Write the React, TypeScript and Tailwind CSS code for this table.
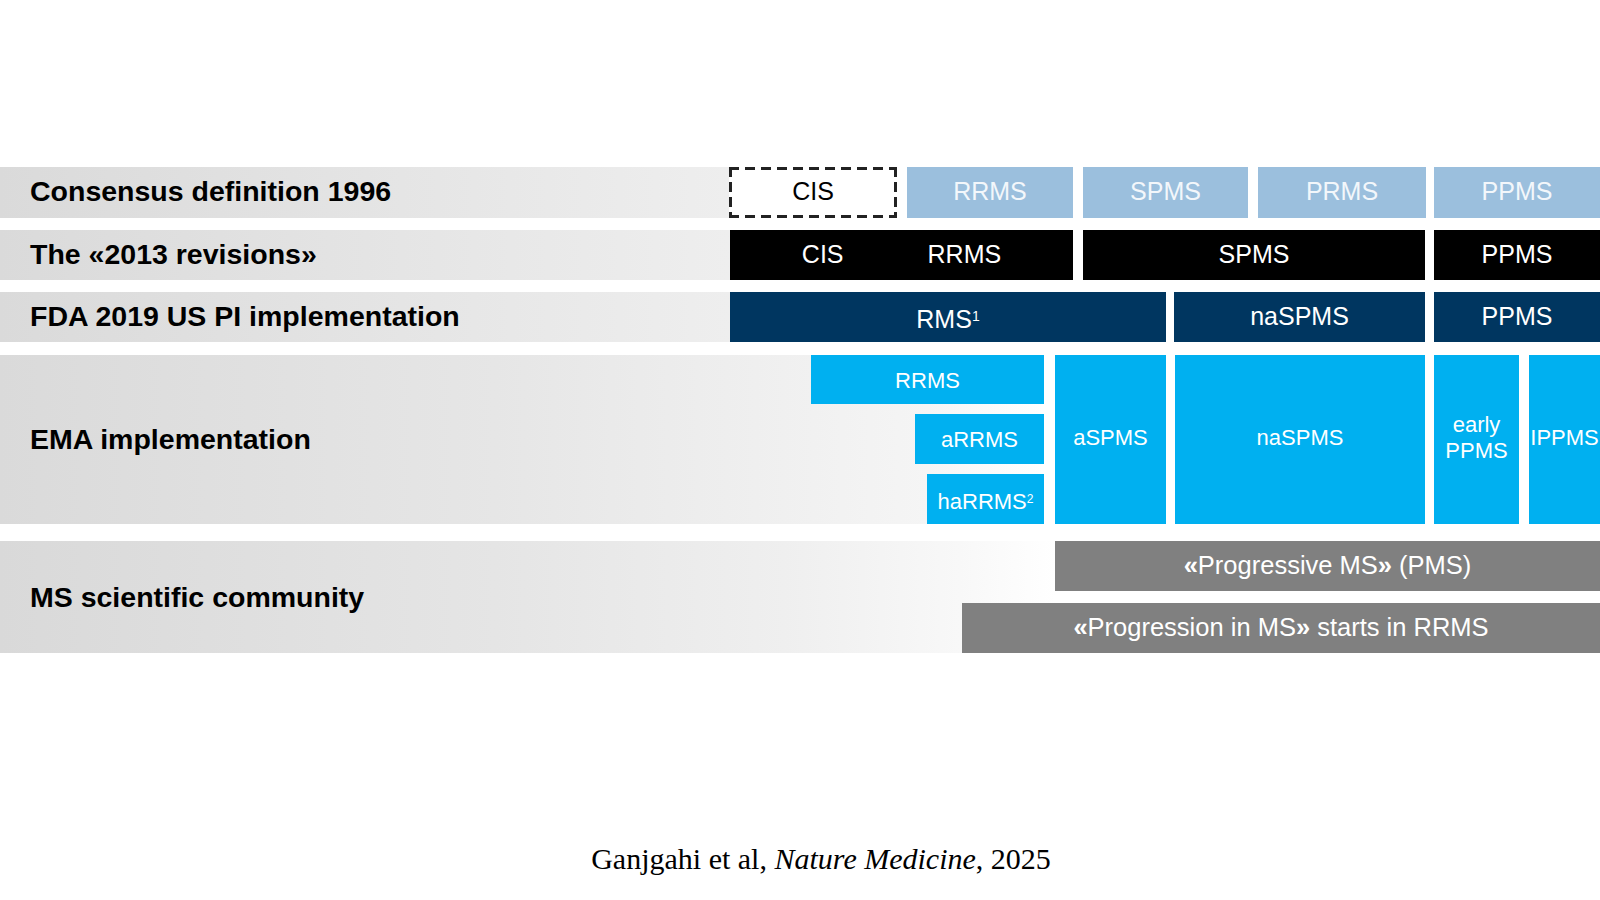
import React from "react";

const sans = { fontFamily: '"Liberation Sans", Arial, sans-serif' };

export default function App() {
  return (
    <div
      className="w-[1600px] h-[900px] bg-white flex flex-col overflow-hidden"
      style={sans}
    >
      <div className="h-[167px] shrink-0" />

      {/* Row 1 */}
      <div className="flex h-[51px] shrink-0">
        <div className="w-[729px] flex items-center pl-[30px] pb-[2px] text-[28.5px] font-bold text-black bg-[linear-gradient(to_right,#dadada,#eeeeee)]">
          Consensus definition 1996
        </div>
        <div className="w-[168px] bg-white bg-[image:repeating-linear-gradient(to_right,#222222_0_10px,transparent_10px_16px),repeating-linear-gradient(to_right,#222222_0_10px,transparent_10px_16px),repeating-linear-gradient(to_bottom,#222222_0_10px,transparent_10px_15px),repeating-linear-gradient(to_bottom,#222222_0_10px,transparent_10px_15px)] bg-[position:left_top,left_bottom,left_top,right_top] bg-[size:100%_3px,100%_3px,3px_100%,3px_100%] bg-no-repeat flex items-center justify-center pb-[2px] text-[25px] text-black">
          CIS
        </div>
        <div className="ml-[10px] w-[166px] bg-[#9bbfdd] flex items-center justify-center pb-[2px] text-[25px] text-[#f3f7fb]">
          RRMS
        </div>
        <div className="ml-[10px] w-[165px] bg-[#9bbfdd] flex items-center justify-center pb-[2px] text-[25px] text-[#f3f7fb]">
          SPMS
        </div>
        <div className="ml-[10px] w-[168px] bg-[#9bbfdd] flex items-center justify-center pb-[2px] text-[25px] text-[#f3f7fb]">
          PRMS
        </div>
        <div className="ml-[8px] flex-1 bg-[#9bbfdd] flex items-center justify-center pb-[2px] text-[25px] text-[#f3f7fb]">
          PPMS
        </div>
      </div>

      {/* Row 2 */}
      <div className="flex h-[50px] mt-[12px] shrink-0">
        <div className="w-[730px] flex items-center pl-[30px] pb-[2px] text-[28.5px] font-bold text-black bg-[linear-gradient(to_right,#dadada,#eeeeee)]">
          The «2013 revisions»
        </div>
        <div className="w-[343px] bg-black flex items-center justify-center gap-[84px] text-[25px] text-white">
          <span>CIS</span>
          <span>RRMS</span>
        </div>
        <div className="ml-[10px] w-[342px] bg-black flex items-center justify-center text-[25px] text-white">
          SPMS
        </div>
        <div className="ml-[9px] flex-1 bg-black flex items-center justify-center text-[25px] text-white">
          PPMS
        </div>
      </div>

      {/* Row 3 */}
      <div className="flex h-[50px] mt-[12px] shrink-0">
        <div className="w-[730px] flex items-center pl-[30px] pb-[2px] text-[28.5px] font-bold text-black bg-[linear-gradient(to_right,#dadada,#eeeeee)]">
          FDA 2019 US PI implementation
        </div>
        <div className="w-[436px] bg-[#003660] flex items-center justify-center text-[25px] text-white">
          <span className="pt-[6px]">
            RMS<sup className="text-[14px]">1</sup>
          </span>
        </div>
        <div className="ml-[8px] w-[251px] bg-[#003660] flex items-center justify-center text-[25px] text-white">
          naSPMS
        </div>
        <div className="ml-[9px] flex-1 bg-[#003660] flex items-center justify-center text-[25px] text-white">
          PPMS
        </div>
      </div>

      {/* Row 4: EMA */}
      <div className="flex h-[169px] mt-[13px] shrink-0 bg-[linear-gradient(to_right,#dadada_0%,#e6e6e6_31%,#f0f0f0_49%,#f5f5f5_58%,#ffffff_65.2%)]">
        <div className="w-[811px] shrink-0 flex items-center pl-[30px] text-[28.5px] font-bold text-black">
          EMA implementation
        </div>
        <div className="w-[233px] shrink-0 flex flex-col items-end gap-[10px] text-[22px] text-white">
          <div className="w-full h-[49px] bg-[#00b0f0] flex items-center justify-center pt-[2px]">
            RRMS
          </div>
          <div className="w-[129px] h-[50px] bg-[#00b0f0] flex items-center justify-center">
            aRRMS
          </div>
          <div className="w-[117px] h-[50px] bg-[#00b0f0] flex items-center justify-center">
            <span className="pt-[4px]">
              haRRMS<sup className="text-[12px]">2</sup>
            </span>
          </div>
        </div>
        <div className="ml-[11px] w-[111px] shrink-0 bg-[#00b0f0] flex items-center justify-center pb-[4px] text-[22px] text-white">
          aSPMS
        </div>
        <div className="ml-[9px] w-[250px] shrink-0 bg-[#00b0f0] flex items-center justify-center pb-[4px] text-[22px] text-white">
          naSPMS
        </div>
        <div className="ml-[9px] w-[85px] shrink-0 bg-[#00b0f0] flex flex-col items-center justify-center pb-[4px] text-[22px] leading-[26px] text-white">
          <span>early</span>
          <span>PPMS</span>
        </div>
        <div className="ml-[10px] flex-1 bg-[#00b0f0] flex items-center justify-center pb-[4px] text-[22px] text-white whitespace-nowrap">
          IPPMS
        </div>
      </div>

      {/* Row 5: MS scientific community */}
      <div className="flex h-[112px] mt-[17px] shrink-0 bg-[linear-gradient(to_right,#d9d9d9_0%,#e5e5e5_31%,#efefef_49%,#f8f8f8_60%,#ffffff_66%)]">
        <div className="w-[962px] shrink-0 flex items-center pl-[30px] text-[28.5px] font-bold text-black">
          MS scientific community
        </div>
        <div className="flex-1 flex flex-col gap-[12px] text-[25.5px] text-white">
          <div className="flex h-[50px]">
            <div className="w-[93px] shrink-0" />
            <div className="flex-1 bg-[#808080] flex items-center justify-center pb-[2px]">
              <span>
                <span className="font-bold">«</span>Progressive MS
                <span className="font-bold">»</span> (PMS)
              </span>
            </div>
          </div>
          <div className="h-[50px] bg-[#808080] flex items-center justify-center pb-[2px]">
            <span>
              <span className="font-bold">«</span>Progression in MS
              <span className="font-bold">»</span> starts in RRMS
            </span>
          </div>
        </div>
      </div>

      {/* Citation */}
      <div
        className="mt-[189px] flex justify-center pl-[42px] text-[30px] leading-[34px] text-black"
        style={{ fontFamily: '"Liberation Serif", "Times New Roman", serif' }}
      >
        <span>
          Ganjgahi et al, <i>Nature Medicine</i>, 2025
        </span>
      </div>
    </div>
  );
}
